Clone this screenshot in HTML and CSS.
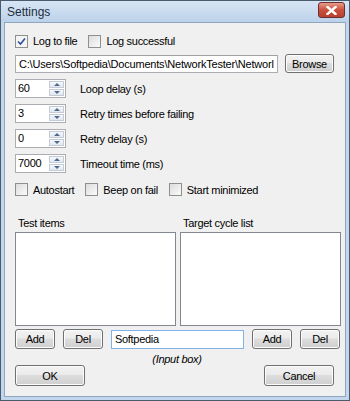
FILE: index.html
```html
<!DOCTYPE html>
<html lang="en">
<head>
    <meta charset="UTF-8">
    <title>Settings</title>
    <link rel="stylesheet" href="styles.css">
</head>
<body>
    <div class="window">
        <div class="titlebar">
            <span class="title">Settings</span>
            <span class="close">
                <svg width="11" height="9" viewBox="0 0 11 9">
                    <path d="M1.5 1 L9.5 8 M9.5 1 L1.5 8" stroke="#fff" stroke-width="2.4" stroke-linecap="square"/>
                </svg>
            </span>
        </div>

        <div class="client">
            <div class="row checks-top">
                <label class="check"><span class="box checked"><svg width="9" height="9" viewBox="0 0 9 9"><path d="M1 4.5 L3.5 7 L8 1.5" fill="none" stroke="#2a4e9a" stroke-width="1.6"/></svg></span>Log to file</label>
                <label class="check"><span class="box"></span>Log successful</label>
            </div>

            <div class="row path-row">
                <div class="field path">C:\Users\Softpedia\Documents\NetworkTester\Networl</div>
                <div class="btn browse">Browse</div>
            </div>

            <div class="spin-row">
                <div class="spin"><span class="field num">60</span><span class="arrows"><span class="up"></span><span class="down"></span></span></div>
                <span class="spin-label">Loop delay (s)</span>
            </div>
            <div class="spin-row">
                <div class="spin"><span class="field num">3</span><span class="arrows"><span class="up"></span><span class="down"></span></span></div>
                <span class="spin-label">Retry times before failing</span>
            </div>
            <div class="spin-row">
                <div class="spin"><span class="field num">0</span><span class="arrows"><span class="up"></span><span class="down"></span></span></div>
                <span class="spin-label">Retry delay (s)</span>
            </div>
            <div class="spin-row">
                <div class="spin"><span class="field num">7000</span><span class="arrows"><span class="up"></span><span class="down"></span></span></div>
                <span class="spin-label">Timeout time (ms)</span>
            </div>

            <div class="row checks-bottom">
                <label class="check"><span class="box"></span>Autostart</label>
                <label class="check"><span class="box"></span>Beep on fail</label>
                <label class="check"><span class="box"></span>Start minimized</label>
            </div>

            <div class="lists">
                <div class="list-col">
                    <div class="list-title">Test items</div>
                    <div class="listbox"></div>
                </div>
                <div class="list-col">
                    <div class="list-title">Target cycle list</div>
                    <div class="listbox"></div>
                </div>
            </div>

            <div class="row actions">
                <div class="btn small">Add</div>
                <div class="btn small">Del</div>
                <div class="field entry">Softpedia</div>
                <div class="btn small">Add</div>
                <div class="btn small">Del</div>
            </div>
            <div class="hint">(Input box)</div>

            <div class="row footer">
                <div class="btn wide">OK</div>
                <div class="btn wide">Cancel</div>
            </div>
        </div>
    </div>
</body>
</html>
```

FILE: styles.css
```css
html, body {
    margin: 0;
    padding: 0;
    background: #ffffff;
}
body {
    font-family: "Liberation Sans", sans-serif;
    font-size: 11px;
    letter-spacing: -0.3px;
    color: #000;
}
.window {
    width: 348px;
    height: 399px;
    border: 1px solid #4a5b6e;
    background: #c2d7ee;
    display: flex;
    flex-direction: column;
}
.titlebar {
    height: 21px;
    display: flex;
    align-items: center;
    justify-content: space-between;
    padding: 0 4px 0 6px;
    background: linear-gradient(#d7e5f5, #bcd2ea);
}
.title {
    font-size: 12px;
    letter-spacing: 0;
    color: #1e2d3d;
}
.close {
    width: 25px;
    height: 14px;
    margin-top: -3px;
    border: 1px solid #6b2f2f;
    border-radius: 3px;
    background: linear-gradient(#e79c8c, #c9503d 50%, #b8412f);
    display: flex;
    align-items: center;
    justify-content: center;
}
.client {
    flex: 1;
    margin: 0 3px 3px 3px;
    border: 1px solid #8fa6bf;
    background: #f0f0f0;
    padding: 0 0 0 10px;
}
.row {
    display: flex;
    align-items: center;
}
.checks-top {
    margin-top: 11px;
    height: 14px;
    gap: 11px;
}
.check {
    display: flex;
    align-items: center;
    gap: 5px;
}
.box {
    width: 11px;
    height: 11px;
    border: 1px solid #8e8f8f;
    background: linear-gradient(135deg, #dcdcdc, #fbfbfb);
    display: flex;
    align-items: center;
    justify-content: center;
}
.box.checked {
    background: #f4f4f4;
}
.field {
    box-sizing: border-box;
    background: #fff;
    border: 1px solid #abadb3;
    border-top-color: #a0a0a0;
    line-height: 16px;
    padding: 0 3px;
    white-space: nowrap;
    overflow: hidden;
}
.path-row {
    margin-top: 6px;
    gap: 7px;
}
.path {
    width: 263px;
    height: 18px;
    letter-spacing: -0.2px;
}
.btn {
    box-sizing: border-box;
    height: 19px;
    border: 1px solid #707070;
    border-radius: 3px;
    background: linear-gradient(#f2f2f2, #ebebeb 45%, #dddddd 50%, #cfcfcf);
    box-shadow: inset 0 0 0 1px #fcfcfc;
    display: flex;
    align-items: center;
    justify-content: center;
}
.browse {
    width: 49px;
}
.spin-row {
    display: flex;
    align-items: center;
    margin-top: 6px;
}
.spin {
    display: flex;
    width: 51px;
    height: 19px;
    box-sizing: border-box;
    border: 1px solid #abadb3;
    background: #fff;
}
.spin .num {
    border: none;
    flex: 1;
    line-height: 17px;
    padding: 0 2px;
}
.arrows {
    width: 15px;
    display: flex;
    flex-direction: column;
    gap: 1px;
    padding: 1px 1px 1px 0;
}
.up, .down {
    flex: 1;
    border: 1px solid #c2cbd6;
    background: linear-gradient(#f6f8fa, #e2e8ee);
    display: flex;
    align-items: center;
    justify-content: center;
}
.up::after {
    content: "";
    border-left: 3px solid transparent;
    border-right: 3px solid transparent;
    border-bottom: 3px solid #4d6a91;
}
.down::after {
    content: "";
    border-left: 3px solid transparent;
    border-right: 3px solid transparent;
    border-top: 3px solid #4d6a91;
}
.spin-label {
    margin-left: 14px;
}
.checks-bottom {
    margin-top: 10px;
    gap: 11px;
}
.lists {
    display: grid;
    grid-template-columns: 161px 161px;
    gap: 4px;
    margin-top: 21px;
}
.list-title {
    padding-left: 3px;
    height: 14px;
}
.listbox {
    margin-top: 1px;
    height: 92px;
    border: 1px solid #828790;
    background: #fff;
}
.actions {
    margin-top: 3px;
    gap: 8px;
}
.small {
    width: 40px;
    height: 20px;
}
.entry {
    width: 133px;
    height: 19px;
    border-color: #7eb4ea;
    line-height: 17px;
}
.hint {
    margin-top: 5px;
    text-align: center;
    padding-right: 6px;
    font-style: italic;
    font-size: 11px;
    line-height: 11px;
    height: 10px;
}
.footer {
    margin-top: 1px;
    justify-content: space-between;
    padding-right: 11px;
}
.wide {
    width: 70px;
    height: 21px;
}
```
